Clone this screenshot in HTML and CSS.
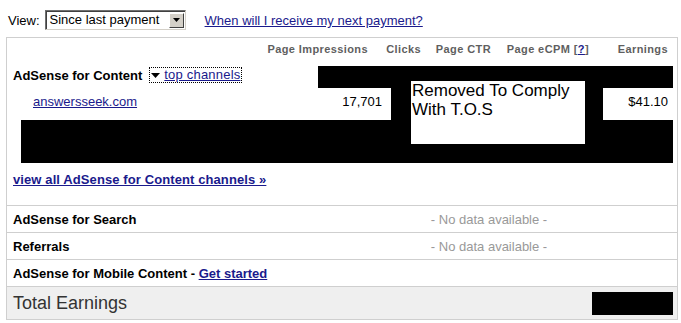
FILE: index.html
```html
<!DOCTYPE html>
<html lang="en">
<head>
  <meta charset="UTF-8">
  <title>AdSense - Earnings</title>
  <link rel="stylesheet" href="styles.css">
</head>
<body>
  <div class="topbar">
    <span class="view-label">View:</span>
    <div class="select">
      <span class="select-text">Since last payment</span>
      <span class="select-btn">
        <svg width="7" height="4" viewBox="0 0 7 4"><path d="M0 0h7L3.5 4z" fill="#000"/></svg>
      </span>
    </div>
    <a class="pay-link" href="#">When will I receive my next payment?</a>
  </div>

  <div class="report">
    <div class="content-block">
      <div class="col-heads">
        <span></span>
        <span>Page Impressions</span>
        <span>Clicks</span>
        <span>Page CTR</span>
        <span>Page eCPM [<a href="#">?</a>]</span>
        <span>Earnings</span>
      </div>

      <div class="product-row">
        <span class="product">AdSense for Content</span>
        <a class="channels-toggle" href="#">
          <svg width="9" height="5" viewBox="0 0 9 5"><path d="M0 0h9L4.5 5z" fill="#000"/></svg>
          top channels
        </a>
      </div>

      <div class="channel-row">
        <a class="channel-name" href="#">answersseek.com</a>
        <span class="num imp">17,701</span>
        <span class="hidden-cells"></span>
        <span class="num earn">$41.10</span>
      </div>

      <div class="more-channels"></div>

      <div class="view-all">
        <a href="#">view all AdSense for Content channels &raquo;</a>
      </div>

      <!-- redaction boxes painted over the channel figures -->
      <div class="redact r1"></div>
      <div class="redact r2"></div>
      <div class="redact r3"></div>
      <div class="redact r4"></div>
      <div class="tos-note">Removed To Comply<br>With T.O.S</div>
    </div>

    <div class="row">
      <span class="row-label">AdSense for Search</span>
      <span class="no-data">- No data available -</span>
    </div>
    <div class="row">
      <span class="row-label">Referrals</span>
      <span class="no-data">- No data available -</span>
    </div>
    <div class="row">
      <span class="row-label">AdSense for Mobile Content - <a href="#">Get started</a></span>
    </div>
    <div class="row total">
      <span class="total-label">Total Earnings</span>
      <span class="total-value"></span>
    </div>
  </div>
</body>
</html>
```

FILE: styles.css
```css
body {
  margin: 0;
  font-family: "Liberation Sans", Arial, sans-serif;
  font-size: 13px;
  color: #000;
  background: #fff;
}
a {
  color: #1a1a8c;
}

.topbar {
  display: flex;
  align-items: center;
  height: 20px;
  padding: 10px 0 7px 8px;
}
.view-label {
  margin-right: 5px;
}
.select {
  display: flex;
  align-items: center;
  justify-content: space-between;
  box-sizing: border-box;
  width: 141px;
  height: 20px;
  border: 1px solid;
  border-color: #6f6f6f #d4d0c8 #d4d0c8 #6f6f6f;
  box-shadow: inset 1px 1px 0 #404040;
  padding: 0 1px 0 4px;
  background: #fff;
}
.select-text {
  line-height: 16px;
}
.select-btn {
  display: flex;
  align-items: center;
  justify-content: center;
  box-sizing: border-box;
  width: 15px;
  height: 15px;
  background: #d4d0c8;
  border: 1px solid;
  border-color: #fff #404040 #404040 #fff;
}
.pay-link {
  margin-left: 19px;
  margin-top: 1px;
}

.report {
  width: 672px;
  box-sizing: border-box;
  margin-left: 6px;
  border: 1px solid #cfcfcf;
}

.content-block {
  position: relative;
  height: 167px;
  border-bottom: 1px solid #cfcfcf;
}
.col-heads {
  display: grid;
  grid-template-columns: 1fr 118px 53px 70px 98px 79px;
  padding-right: 9px;
  height: 24px;
  line-height: 23px;
  font-size: 11px;
  font-weight: bold;
  letter-spacing: 0.4px;
  color: #5f5f5f;
  text-align: right;
}
.product-row {
  display: flex;
  align-items: center;
  height: 26px;
  padding-left: 6px;
}
.product {
  font-weight: bold;
}
.channels-toggle {
  display: flex;
  align-items: center;
  gap: 4px;
  margin-left: 8px;
  padding: 0 1px;
  line-height: 14px;
  letter-spacing: 0.2px;
  outline: 1px dotted #000;
}
.channels-toggle svg {
  margin-top: 1px;
}
.channel-row {
  display: flex;
  align-items: center;
  height: 26px;
}
.channel-name {
  flex: 1;
  padding-left: 26px;
}
.num {
  box-sizing: border-box;
  text-align: right;
  padding-right: 9px;
}
.imp {
  width: 73px;
}
.hidden-cells {
  width: 212px;
}
.earn {
  width: 74px;
}
.more-channels {
  height: 53px;
}
.view-all {
  height: 26px;
  line-height: 26px;
  padding-left: 6px;
  font-weight: bold;
  letter-spacing: 0.1px;
}

.redact {
  position: absolute;
  background: #000;
}
.r1 { left: 311px; top: 28px; width: 355px; height: 22px; }
.r2 { left: 384px; top: 50px; width: 20px; height: 32px; }
.r3 { left: 578px; top: 50px; width: 18px; height: 32px; }
.r4 { left: 14px; top: 82px; width: 652px; height: 43px; }
.tos-note {
  position: absolute;
  left: 404px;
  top: 43px;
  width: 173px;
  height: 63px;
  padding-left: 1px;
  background: #fff;
  font-size: 17px;
  line-height: 19px;
}

.row {
  display: flex;
  align-items: center;
  height: 26px;
  border-bottom: 1px solid #cfcfcf;
  padding-left: 6px;
}
.row-label {
  width: 288px;
  font-weight: bold;
}
.no-data {
  flex: 1;
  text-align: center;
  color: #999;
}
.total {
  height: 32px;
  border-bottom: none;
  background: #efefef;
  justify-content: space-between;
}
.total-label {
  font-size: 18px;
  color: #333;
}
.total-value {
  width: 81px;
  height: 23px;
  margin-right: 4px;
  background: #000;
}
```
